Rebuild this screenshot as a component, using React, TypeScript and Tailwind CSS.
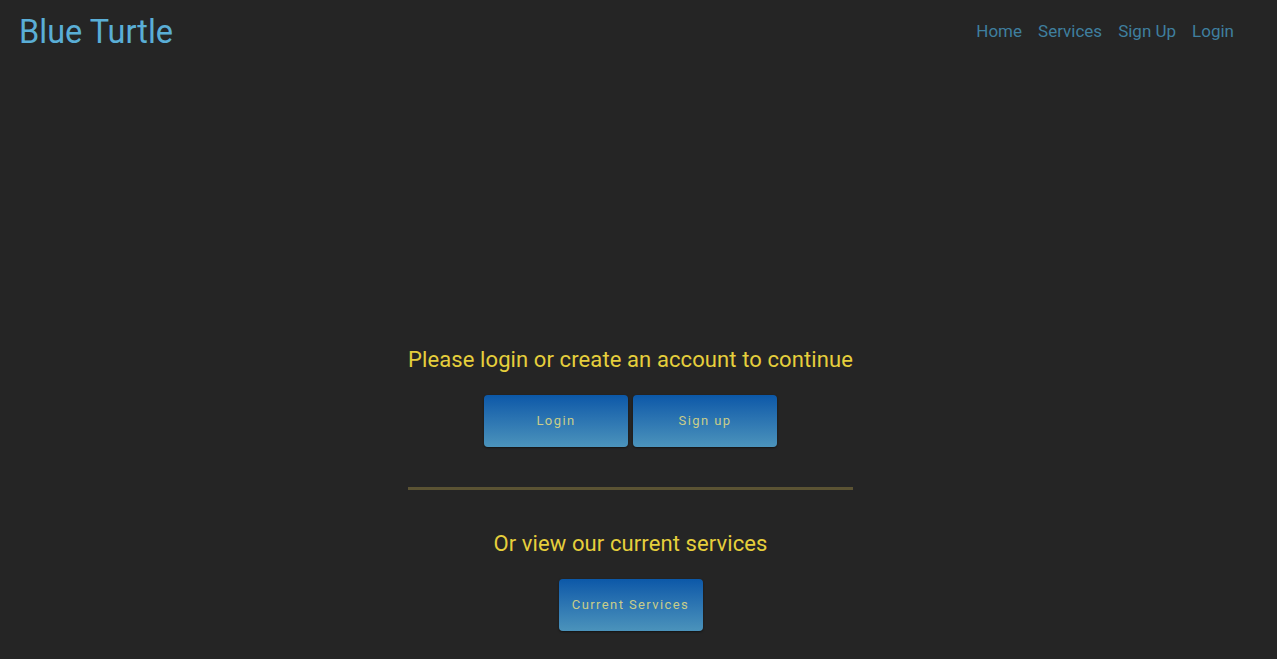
import React from 'react';

const navLinks = ['Home', 'Services', 'Sign Up', 'Login'];

function GradientButton({ label }: { label: string }) {
  return (
    <button className="w-[144px] h-[52px] rounded-[4px] bg-gradient-to-b from-[#0b58a8] to-[#4b93bb] text-[13px] tracking-[1.4px] text-[#c9cd8a] shadow-[0_1px_2px_rgba(0,0,0,0.5)]">
      {label}
    </button>
  );
}

export default function App() {
  return (
    <div className="min-h-[659px] bg-[#252525] font-['Roboto',sans-serif]">
      <header className="flex items-center justify-between pl-[19px] pr-[43px] h-[64px]">
        <a className="text-[32.5px] text-[#5aaed6] leading-none mt-[1px]">Blue Turtle</a>
        <nav className="flex gap-[16px]">
          {navLinks.map(link => (
            <a key={link} className="text-[17px] text-[#3f7f9f]">
              {link}
            </a>
          ))}
        </nav>
      </header>

      <main className="flex flex-col items-center pr-[16px] pt-[279px]">
        <h2 className="text-[22px] tracking-[0.1px] text-[#e6cf3c] leading-[34px]">
          Please login or create an account to continue
        </h2>
        <div className="flex gap-[5px] mt-[18px]">
          <GradientButton label="Login" />
          <GradientButton label="Sign up" />
        </div>
        <hr className="w-[445px] h-[3px] border-0 bg-[#5b5333] mt-[40px]" />
        <h2 className="text-[22px] tracking-[0.1px] text-[#e6cf3c] leading-[34px] mt-[37px]">
          Or view our current services
        </h2>
        <div className="mt-[18px]">
          <GradientButton label="Current Services" />
        </div>
      </main>
    </div>
  );
}
